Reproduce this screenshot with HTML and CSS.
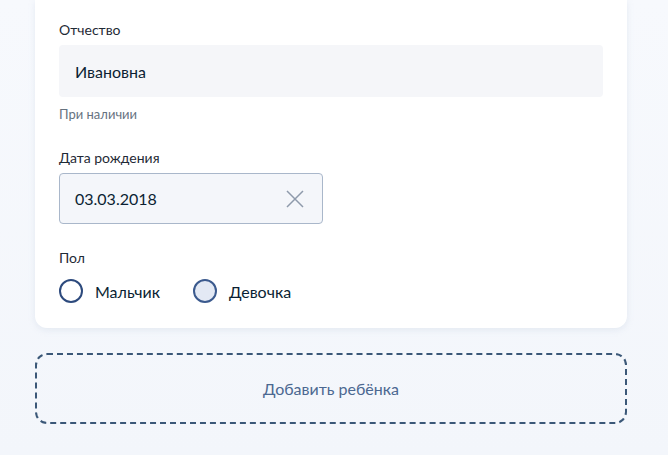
FILE: index.html
```html
<!DOCTYPE html>
<html lang="ru">
<head>
<meta charset="utf-8">
<link rel="stylesheet" href="styles.css">
</head>
<body>
<div class="page">
  <div class="card">
    <div class="field">
      <div class="label">Отчество</div>
      <div class="input">Ивановна</div>
      <div class="hint">При наличии</div>
    </div>
    <div class="field">
      <div class="label">Дата рождения</div>
      <div class="input date">
        <span>03.03.2018</span>
        <svg class="clear" width="18" height="18" viewBox="0 0 18 18"><path d="M1 1L17 17M17 1L1 17" stroke="#8e9aab" stroke-width="1.5" fill="none"/></svg>
      </div>
    </div>
    <div class="field">
      <div class="label">Пол</div>
      <div class="radios">
        <label class="radio"><span class="circle"></span>Мальчик</label>
        <label class="radio"><span class="circle filled"></span>Девочка</label>
      </div>
    </div>
  </div>
  <div class="add">Добавить ребёнка</div>
</div>
</body>
</html>
```
FILE: styles.css
```css
html, body {
  margin: 0;
  padding: 0;
}
body {
  background: linear-gradient(180deg, #f7f9fd 0%, #f3f6fb 100%);
  font-family: Lato, "Noto Sans", sans-serif;
  width: 668px;
  height: 455px;
  overflow: hidden;
}
.page {
  padding-left: 35px;
  width: 592px;
}
.card {
  background: #ffffff;
  border-radius: 0 0 12px 12px;
  box-shadow: 0 2px 6px rgba(180, 195, 215, 0.25);
  padding: 20px 24px 25px;
}
.field + .field {
  margin-top: 25px;
}
.field:last-child {
  margin-top: 24px;
}
.label {
  font-size: 14px;
  line-height: 20px;
  color: #1f2a36;
}
.input {
  margin-top: 5px;
  height: 52px;
  box-sizing: border-box;
  background: #f5f6f9;
  border-radius: 4px;
  padding: 0 16px;
  display: flex;
  align-items: center;
  font-size: 16px;
  color: #0b1f33;
}
.input.date {
  width: 264px;
  height: 51px;
  border: 1.5px solid #a9b7ca;
  background: #f4f6fa;
  justify-content: space-between;
  padding: 0 18px 0 15px;
}
.clear {
  display: block;
}
.hint {
  margin-top: 8px;
  font-size: 13px;
  line-height: 18px;
  color: #66727f;
}
.radios {
  margin-top: 11px;
  display: flex;
  gap: 33px;
}
.radio {
  display: flex;
  align-items: center;
  gap: 12px;
  font-size: 16px;
  color: #0b1f33;
  height: 24px;
}
.circle {
  width: 24px;
  height: 24px;
  box-sizing: border-box;
  border: 2px solid #2d4a7d;
  border-radius: 50%;
  background: #ffffff;
}
.circle.filled {
  background: #e3e9f4;
  border-color: #3b5a8e;
}
.add {
  margin-top: 25px;
  height: 71px;
  box-sizing: border-box;
  border: 2px dashed #3b5878;
  border-radius: 12px;
  display: flex;
  align-items: center;
  justify-content: center;
  font-size: 16px;
  color: #4b6891;
}
```
